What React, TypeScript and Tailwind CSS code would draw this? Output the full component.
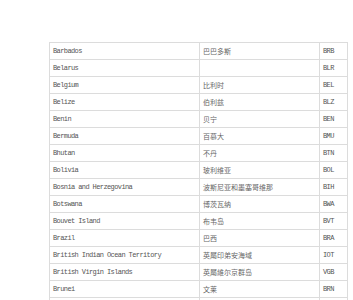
const rows: [string, string, string][] = [
  ["Barbados", "巴巴多斯", "BRB"],
  ["Belarus", "", "BLR"],
  ["Belgium", "比利时", "BEL"],
  ["Belize", "伯利兹", "BLZ"],
  ["Benin", "贝宁", "BEN"],
  ["Bermuda", "百慕大", "BMU"],
  ["Bhutan", "不丹", "BTN"],
  ["Bolivia", "玻利维亚", "BOL"],
  ["Bosnia and Herzegovina", "波斯尼亚和墨塞哥维那", "BIH"],
  ["Botswana", "博茨瓦纳", "BWA"],
  ["Bouvet Island", "布韦岛", "BVT"],
  ["Brazil", "巴西", "BRA"],
  ["British Indian Ocean Territory", "英屬印弟安海域", "IOT"],
  ["British Virgin Islands", "英屬維尔京群岛", "VGB"],
  ["Brunei", "文莱", "BRN"],
  ["Bulgaria", "保加利亚", "BGR"],
];

export default function App() {
  return (
    <div className="w-[353px] h-[300px] overflow-hidden bg-white">
      <div className="pt-[42px] pl-[49px]">
        <table className="w-[298px] border-collapse text-[#555] table-fixed">
          <colgroup>
            <col className="w-[150px]" />
            <col className="w-[120px]" />
            <col className="w-[28px]" />
          </colgroup>
          <tbody>
            {rows.map(([en, zh, code]) => (
              <tr key={code} className="h-[17px]">
                <td className="border border-[#dcdcdc] px-[3px] py-0 text-[7px] tracking-[-0.6px] leading-none font-['Liberation_Mono',monospace]">
                  {en}
                </td>
                <td className="border border-[#dcdcdc] px-[3px] py-0 text-[7px] leading-none text-[#666] font-['Noto_Sans_CJK_SC',sans-serif]">
                  {zh}
                </td>
                <td className="border border-[#dcdcdc] px-[3px] py-0 text-[7px] tracking-[-0.6px] leading-none font-['Liberation_Mono',monospace]">
                  {code}
                </td>
              </tr>
            ))}
          </tbody>
        </table>
      </div>
    </div>
  );
}
